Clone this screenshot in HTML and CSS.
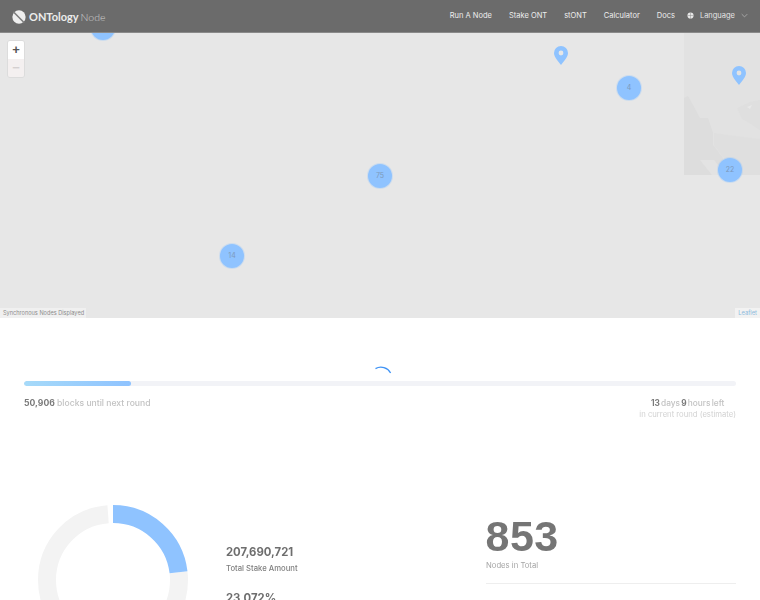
FILE: index.html
```html
<!DOCTYPE html>
<html lang="en">
<head>
<meta charset="utf-8">
<title>ONTology Node</title>
<link rel="stylesheet" href="styles.css">
</head>
<body>
<div class="page">
  <header class="topbar">
    <a class="brand">
      <svg class="brand-logo" viewBox="0 0 16 16"><circle cx="8" cy="8" r="7.6" fill="#efefef"/><path d="M1.5 2 L14 14.5" stroke="#7d7d7d" stroke-width="1.8"/></svg>
      <span class="brand-strong">ONTology</span><span class="brand-light">Node</span>
    </a>
    <nav class="nav">
      <a>Run A Node</a><a>Stake ONT</a><a>stONT</a><a>Calculator</a><a>Docs</a>
      <a class="lang">
        <svg class="globe" viewBox="0 0 10 10"><circle cx="5" cy="5" r="4.4" fill="#e8e8e8"/><path d="M.6 5h8.8M5 .6v8.8" stroke="#8a8a8a" stroke-width=".7"/></svg>
        <span>Language</span>
        <svg class="chev" viewBox="0 0 10 6"><path d="M1 1l4 4 4-4" fill="none" stroke="#bdbdbd" stroke-width="1"/></svg>
      </a>
    </nav>
  </header>
  <section class="map">
    <div class="tile">
      <svg viewBox="0 0 76 142" preserveAspectRatio="none">
        <path d="M0 65l4-2 5 9 7 13h8l5 15v12l10 13 4 17H0z" fill="#dddddd"/>
        <path d="M53 75l13-6 10-2v30l-9-6-9-5zM30 100l14 2 32 4v36H46l-6-17-10-13z" fill="#dfdfdf"/>
        <path d="M16 127l14 0 12 15H28z" fill="#e3e3e3"/>
        <path d="M63 74l5-2-2 4z" fill="#e8e8e8"/>
      </svg>
    </div>
    <div class="zoom">
      <button class="zoom-btn">+</button>
      <button class="zoom-btn zoom-off">−</button>
    </div>
    <div class="cluster c1"></div>
    <div class="cluster c2">4</div>
    <div class="cluster c3">75</div>
    <div class="cluster c4">14</div>
    <div class="cluster c5">22</div>
    <svg class="pin p1" viewBox="0 0 14 19"><path fill-rule="evenodd" d="M7 0a7 7 0 0 1 7 7c0 4-4 8-7 12C4 15 0 11 0 7a7 7 0 0 1 7-7zm0 4.6a2.4 2.4 0 1 0 0 4.8 2.4 2.4 0 0 0 0-4.8z" fill="#8fc3ff"/></svg>
    <svg class="pin p2" viewBox="0 0 14 19"><path fill-rule="evenodd" d="M7 0a7 7 0 0 1 7 7c0 4-4 8-7 12C4 15 0 11 0 7a7 7 0 0 1 7-7zm0 4.6a2.4 2.4 0 1 0 0 4.8 2.4 2.4 0 0 0 0-4.8z" fill="#8fc3ff"/></svg>
    <div class="note">Synchronous Nodes Displayed</div>
    <div class="attrib">Leaflet</div>
  </section>
  <section class="round">
    <svg class="spinner" viewBox="0 0 20 20"><path d="M3.5 2.6A11 11 0 0 1 18.6 7" fill="none" stroke="#3f93f5" stroke-width="1.3"/></svg>
    <div class="track"><div class="fill"></div></div>
    <div class="round-info">
      <p class="blocks"><b>50,906</b> blocks until next round</p>
      <div class="left-info">
        <p class="days"><b>13</b> days <b>9</b> hours left</p>
        <p class="estimate">in current round (estimate)</p>
      </div>
    </div>
  </section>
  <section class="stats">
    <div class="stake">
      <svg class="donut" viewBox="0 0 150 150">
        <circle cx="75" cy="75" r="66" fill="none" stroke="#f3f3f3" stroke-width="18" stroke-dasharray="0 95.6 313.4 5.7" transform="rotate(-90 75 75)"/>
        <circle cx="75" cy="75" r="66" fill="none" stroke="#8fc3ff" stroke-width="18" stroke-dasharray="95.6 319.1" transform="rotate(-90 75 75)"/>
      </svg>
      <div class="stake-text">
        <p class="stake-num">207,690,721</p>
        <p class="stake-label">Total Stake Amount</p>
        <p class="stake-num">23.072%</p>
      </div>
    </div>
    <div class="nodes">
      <p class="big">853</p>
      <p class="nodes-label">Nodes in Total</p>
      <hr class="rule">
      <div class="nodes-row"><span>86</span><span>60</span></div>
    </div>
  </section>
</div>
</body>
</html>
```
FILE: styles.css
```css
* { box-sizing: border-box; }
html, body { margin: 0; height: 100%; overflow: hidden; background: #fff; }
p { margin: 0; }
.page { font-family: Inter, "Liberation Sans", sans-serif; filter: blur(0.55px); height: 600px; overflow: hidden; }
.topbar { height: 33px; background: #6b6b6b; border-bottom: 1px solid #8a8a8a; display: flex; justify-content: space-between; align-items: center; padding: 0 12px; color: #eee; }
.brand { display: flex; align-items: center; font-family: Lato, sans-serif; font-size: 11px; margin-top: 1px; }
.brand-logo { width: 14px; height: 14px; margin-right: 3px; }
.brand-strong { font-weight: 700; color: #ececec; margin-right: 2px; }
.brand-light { color: #cfcfcf; font-weight: 300; font-size: 10.5px; }
.nav { display: flex; align-items: center; gap: 17px; font-size: 7.5px; padding-bottom: 2px; }
.lang { display: flex; align-items: center; color: #e4e4e4; margin-left: -5px; }
.globe { width: 7px; height: 7px; margin-right: 6px; }
.chev { width: 7px; height: 5px; margin-left: 6px; }
.map { position: relative; height: 285px; background: #e7e7e7; overflow: hidden; }
.tile { position: absolute; left: 684px; top: 0; width: 76px; height: 142px; background: #e2e2e2; }
.tile svg { display: block; width: 100%; height: 100%; }
.zoom { position: absolute; left: 7px; top: 7px; width: 18px; border: 1px solid #dcdcdc; border-radius: 3px; overflow: hidden; }
.zoom-btn { display: block; width: 100%; height: 18px; padding: 0; border: 0; background: #fff; color: #555; font: 700 13px/18px "Liberation Sans", sans-serif; }
.zoom-off { background: #f4f0f0; color: #d4d0d0; }
.cluster { position: absolute; width: 24px; height: 24px; border-radius: 50%; background: #8fc3ff; color: #7d99bb; font-size: 7px; line-height: 24px; text-align: center; box-shadow: 0 0 0 1px rgba(143, 195, 255, .3); }
.c1 { left: 91px; top: -17px; }
.c2 { left: 617px; top: 43px; }
.c3 { left: 368px; top: 131px; }
.c4 { left: 220px; top: 211px; }
.c5 { left: 718px; top: 125px; }
.pin { position: absolute; width: 14px; height: 19px; }
.p1 { left: 554px; top: 13px; }
.p2 { left: 732px; top: 33px; }
.note { position: absolute; left: 0; bottom: 0; height: 10px; padding: 0 2px 0 3px; background: #f0f0f0; color: #8c8c8c; font-size: 5.6px; line-height: 10px; }
.attrib { position: absolute; right: 0; bottom: 0; height: 10px; padding: 0 3px; background: #f2f2f2; color: #8dbbdd; font-size: 5.8px; line-height: 10px; }
.round { position: relative; height: 160px; padding: 63px 24px 0; }
.spinner { position: absolute; left: 372px; top: 48px; width: 20px; height: 20px; }
.track { height: 5px; background: #f2f3f7; border-radius: 3px; overflow: hidden; }
.fill { width: 107px; height: 100%; border-radius: 3px; background: linear-gradient(90deg, #a6daf9, #8fc3ff); }
.round-info { display: flex; justify-content: space-between; margin-top: 12px; font-size: 8.6px; color: #c2c2c2; font-weight: 500; }
.blocks b, .days b { color: #7a7a7a; font-weight: 700; }
.left-info { text-align: center; }
.days { line-height: 11px; word-spacing: -1px; font-size: 8.3px; }
.estimate { margin-top: 0; color: #d2d2d2; font-weight: 400; font-size: 7.7px; line-height: 11px; }
.stats { display: flex; padding: 27px 24px 0 38px; }
.stake { width: 448px; display: flex; }
.donut { width: 150px; height: 150px; flex: none; }
.stake-text { margin-left: 38px; padding-top: 40px; }
.stake-num { color: #6e6e6e; font-weight: 700; font-size: 11.3px; line-height: 14px; }
.stake-label { color: #7f7f7f; font-weight: 500; font-size: 7.7px; margin: 4px 0 17px; line-height: 11px; }
.nodes { flex: 1; }
.big { color: #757575; font-family: "Liberation Sans", sans-serif; font-weight: 700; font-size: 43px; letter-spacing: .5px; line-height: 48px; margin: 7px 0 0 -.5px; }
.nodes-label { color: #a5a5a5; font-size: 7.7px; line-height: 11px; }
.rule { border: 0; border-top: 1px solid #eee; margin: 12px 0 10px; }
.nodes-row { display: flex; gap: 52px; padding-left: 88px; color: #999; font-family: "Liberation Sans", sans-serif; font-weight: 700; font-size: 33px; line-height: 38px; }
```
